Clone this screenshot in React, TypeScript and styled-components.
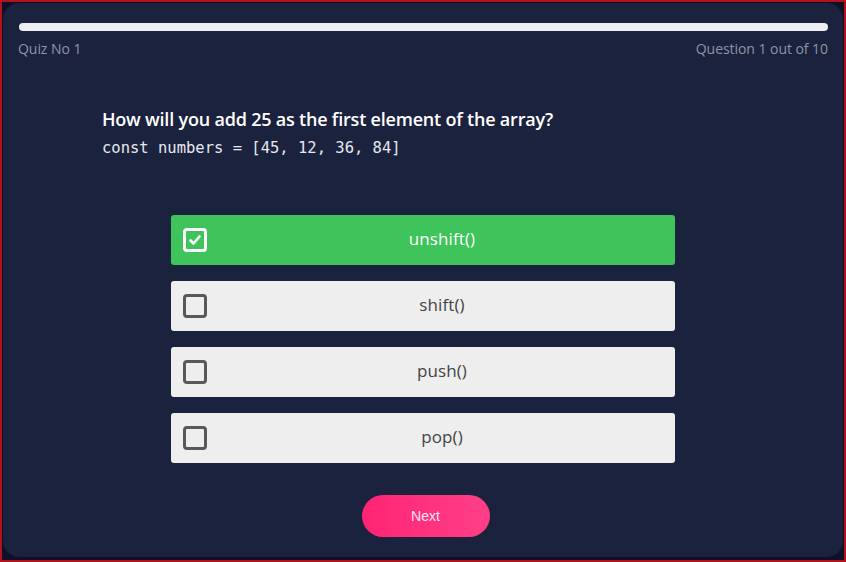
import React, { useState } from "react";
import styled, { createGlobalStyle } from "styled-components";

const Global = createGlobalStyle`
  html, body { margin: 0; padding: 0; }
  body { font-family: "Open Sans", "Noto Sans", sans-serif; background: #0d1028; }
  * { box-sizing: border-box; }
`;

const Frame = styled.div`
  width: 846px;
  height: 562px;
  border: 2px solid #b3121c;
  background: #0d1028;
  padding: 1px 1px 3px 1px;
  display: flex;
`;

const Card = styled.div`
  flex: 1;
  background: #1b223d;
  border-radius: 16px;
  padding: 20px 15px 0 15px;
  display: flex;
  flex-direction: column;
`;

const Progress = styled.div`
  height: 8px;
  border-radius: 4px;
  background: #eceef2;
  margin: 0 0 0 1px;
`;

const Meta = styled.div`
  display: flex;
  justify-content: space-between;
  margin-top: 8px;
  font-size: 14px;
  letter-spacing: -0.05px;
  color: #8e94a8;
  line-height: 20px;
`;

const Question = styled.div`
  margin: 48px 0 0 84px;
  display: flex;
  flex-direction: column;
  gap: 6px;
`;

const Title = styled.div`
  font-size: 18px;
  font-weight: 600;
  color: #ffffff;
  line-height: 24px;
  letter-spacing: -0.2px;
`;

const Code = styled.code`
  font-family: "DejaVu Sans Mono", "Liberation Mono", monospace;
  font-size: 15.5px;
  color: #e6e8ee;
  line-height: 22px;
`;

const Options = styled.div`
  margin: 56px 0 0 153px;
  width: 504px;
  display: flex;
  flex-direction: column;
  gap: 16px;
`;

const Option = styled.button<{ $selected: boolean }>`
  all: unset;
  box-sizing: border-box;
  height: 50px;
  border-radius: 3px;
  background: ${(p) => (p.$selected ? "#3ec45a" : "#eeeeee")};
  color: ${(p) => (p.$selected ? "#ffffff" : "#444444")};
  display: grid;
  grid-template-columns: 24px 1fr;
  column-gap: 14px;
  align-items: center;
  padding: 0 12px;
  cursor: pointer;
  font-family: "Open Sans", sans-serif;
  font-size: 17px;
  letter-spacing: 0.1px;
`;

const Box = styled.span<{ $selected: boolean }>`
  width: 24px;
  height: 24px;
  border-radius: 4px;
  border: 3px solid ${(p) => (p.$selected ? "#ffffff" : "#585858")};
  display: flex;
  align-items: center;
  justify-content: center;
`;

const Label = styled.span`
  text-align: center;
  margin-top: -3px;
`;

const NextRow = styled.div`
  display: flex;
  justify-content: center;
  margin: 32px 0 0 5px;
`;

const NextButton = styled.button`
  width: 128px;
  height: 42px;
  border: none;
  border-radius: 21px;
  background: linear-gradient(90deg, #ff2474, #ff3f88);
  color: #fbe6f0;
  font-family: "Liberation Sans", Arial, sans-serif;
  font-size: 14px;
  cursor: pointer;
`;

const options = ["unshift()", "shift()", "push()", "pop()"];

export default function App() {
  const [selected, setSelected] = useState(0);
  return (
    <>
      <Global />
      <Frame>
        <Card>
          <Progress />
          <Meta>
            <span>Quiz No 1</span>
            <span>Question 1 out of 10</span>
          </Meta>
          <Question>
            <Title>How will you add 25 as the first element of the array?</Title>
            <Code>const numbers = [45, 12, 36, 84]</Code>
          </Question>
          <Options>
            {options.map((o, i) => (
              <Option key={o} $selected={selected === i} onClick={() => setSelected(i)}>
                <Box $selected={selected === i}>
                  {selected === i && (
                    <svg width="14" height="14" viewBox="0 0 14 14">
                      <path d="M2.5 7.5 L5.5 10.5 L11.5 3.5" fill="none" stroke="#fff" strokeWidth="2.6" strokeLinecap="round" strokeLinejoin="round" />
                    </svg>
                  )}
                </Box>
                <Label>{o}</Label>
              </Option>
            ))}
          </Options>
          <NextRow>
            <NextButton>Next</NextButton>
          </NextRow>
        </Card>
      </Frame>
    </>
  );
}
